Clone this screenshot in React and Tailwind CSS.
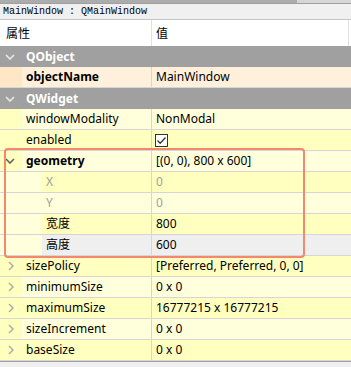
import React from 'react';

const L = 'bg-[#ffffdc]';
const D = 'bg-[#ffffbf]';

const rows = [
  { group: 'QObject' },
  { name: 'objectName', value: 'MainWindow', bold: true, bg: 'bg-[#fff0dc]', branch: 'bg-[#ffe6c4]' },
  { group: 'QWidget' },
  { name: 'windowModality', value: 'NonModal', bg: L, branch: D },
  { name: 'enabled', checkbox: true, bg: D, branch: D },
  { name: 'geometry', value: '[(0, 0), 800 x 600]', bold: true, open: true, bg: L, branch: D },
  { name: 'X', value: '0', sub: true, muted: true, bg: D, branch: L },
  { name: 'Y', value: '0', sub: true, muted: true, bg: L, branch: L },
  { name: '宽度', value: '800', sub: true, bg: D, branch: L },
  { name: '高度', value: '600', sub: true, bg: 'bg-[#efefef]', branch: L },
  { name: 'sizePolicy', value: '[Preferred, Preferred, 0, 0]', closed: true, bg: D, branch: D },
  { name: 'minimumSize', value: '0 x 0', closed: true, bg: L, branch: D },
  { name: 'maximumSize', value: '16777215 x 16777215', closed: true, bg: D, branch: D },
  { name: 'sizeIncrement', value: '0 x 0', closed: true, bg: L, branch: D },
  { name: 'baseSize', value: '0 x 0', closed: true, bg: D, branch: D },
];

const ChevronDown = ({ color }) => (
  <svg width="10" height="6" viewBox="0 0 10 6" className="ml-[5px]">
    <path d="M1 1 L5 5 L9 1" fill="none" stroke={color} strokeWidth="1.6" />
  </svg>
);

const ChevronRight = () => (
  <svg width="6" height="10" viewBox="0 0 6 10" className="ml-[8px]">
    <path d="M1 1 L5 5 L1 9" fill="none" stroke="#a8a8a8" strokeWidth="1.4" />
  </svg>
);

const Row = ({ r }) => {
  if (r.group) {
    return (
      <div className="h-[21px] bg-[#a0a0a0] flex items-center">
        <ChevronDown color="#e8e8e8" />
        <span className="ml-[11px] text-white font-bold">{r.group}</span>
      </div>
    );
  }
  const text = r.muted ? 'text-[#a0a0a0]' : 'text-black';
  return (
    <div className="h-[21px] flex border-b border-[#d6d6d6]">
      <div className={`w-[152px] shrink-0 flex border-r border-[#d6d6d6] ${r.bg}`}>
        <div className={`${r.sub ? 'w-[42px]' : 'w-[22px]'} shrink-0 flex items-center ${r.branch}`}>
          {r.open && <ChevronDown color="#606060" />}
          {r.closed && <ChevronRight />}
        </div>
        <span className={`pl-[4px] self-center whitespace-nowrap ${r.bold ? 'font-bold' : ''} ${text}`}>{r.name}</span>
      </div>
      <div className={`flex-1 flex items-center pl-[4px] whitespace-nowrap ${r.bg} ${text}`}>
        {r.checkbox ? (
          <svg width="13" height="13" viewBox="0 0 13 13" className="ml-[-1px]">
            <rect x="0.5" y="0.5" width="12" height="12" fill="#ffffff" stroke="#333333" />
            <path d="M2.5 6.5 L5.2 9.2 L10.5 3.5" fill="none" stroke="#333333" strokeWidth="1.3" />
          </svg>
        ) : (
          r.value
        )}
      </div>
    </div>
  );
};

export default function App() {
  return (
    <div className="w-[351px] h-[367px] overflow-hidden bg-white relative text-[12px] font-['Noto_Sans','Noto_Sans_CJK_SC',sans-serif] leading-none">
      <div className="flex h-[3px]">
        <div className="w-[297px] bg-[#acacac]" />
        <div className="flex-1 bg-[#d6d6d6]" />
      </div>
      <div className="h-[1px] bg-[#a0a0a0]" />
      <div className="h-[16px] bg-[#f0f0f0] border-b border-[#c4c4c4] flex items-center pl-[3px] font-['Liberation_Mono',monospace] text-[10px] text-black">
        MainWindow : QMainWindow
      </div>
      <div className="h-[26px] flex bg-white">
        <div className="w-[152px] border-r border-[#e0e0e0] flex items-center pl-[6px] font-['Noto_Sans_CJK_SC',sans-serif]">属性</div>
        <div className="w-[197px] border-r border-[#e0e0e0] flex items-center pl-[4px] font-['Noto_Sans_CJK_SC',sans-serif]">值</div>
      </div>
      {rows.map((r, i) => (
        <Row key={i} r={r} />
      ))}
      <div className="h-[1px] bg-[#a0a0a0]" />
      <div className="h-[10px] bg-[#f0f0f0]" />
      <div className="absolute left-[4px] top-[148px] w-[301px] h-[110px] border-2 border-[#f5876f] rounded-[4px]" />
    </div>
  );
}
